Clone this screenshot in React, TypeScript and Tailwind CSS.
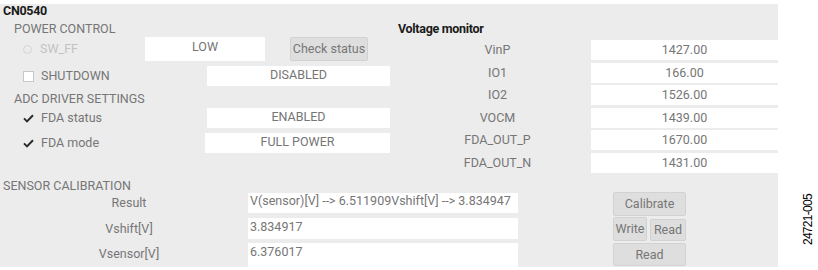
const txt = "text-[12.5px] leading-[14px] text-[#767676]";
const box = "bg-white text-[12.5px] leading-[14px] text-[#767676]";
const btn =
  "bg-[#dedede] border border-[#d2d2d2] rounded-[2px] text-[12.5px] leading-[14px] text-[#767676] flex items-center justify-center";

const Check = () => (
  <svg width="11" height="9" viewBox="0 0 11 9" className="shrink-0">
    <path d="M1 4.4 L4 7.4 L10 1.2" fill="none" stroke="#2a2a2a" strokeWidth="2" />
  </svg>
);

const monitor = [
  { name: "VinP", value: "1427.00" },
  { name: "IO1", value: "166.00" },
  { name: "IO2", value: "1526.00" },
  { name: "VOCM", value: "1439.00" },
  { name: "FDA_OUT_P", value: "1670.00" },
  { name: "FDA_OUT_N", value: "1431.00" },
];

const App = () => {
  return (
    <div className="flex w-[818px] h-[270px] bg-white font-['Roboto',sans-serif]">
      <div className="mt-[4px] w-[778px] h-[263px] bg-[#ececec] flex flex-col">
        {/* top */}
        <div className="flex h-[174px]">
          <div className="w-[390px] flex flex-col">
            <div className="h-[18px] pl-[3px] font-bold text-[12.5px] leading-[14px] text-[#1a1a1a] tracking-[-0.3px]">
              CN0540
            </div>
            <div className={`h-[14px] pl-[14px] ${txt}`}>POWER CONTROL</div>
            <div className="mt-[1px] h-[24px] flex">
              <div className="w-[145px] flex items-center pl-[23px] gap-[8px]">
                <div className="w-[9px] h-[9px] rounded-full border border-[#d4d4d4]"></div>
                <span className="text-[12.5px] leading-[14px] text-[#c2c2c2]">SW_FF</span>
              </div>
              <div className={`w-[120px] h-full text-center pt-[3px] ${box}`}>LOW</div>
              <div className={`ml-[25px] w-[78px] h-full ${btn}`}>Check status</div>
            </div>
            <div className="mt-[5px] h-[20px] flex">
              <div className="w-[207px] flex items-center pl-[23px] gap-[7px]">
                <div className="w-[11px] h-[11px] bg-white border border-[#c8c8c8]"></div>
                <span className={txt}>SHUTDOWN</span>
              </div>
              <div className={`w-[183px] h-full text-center pt-[2px] ${box}`}>DISABLED</div>
            </div>
            <div className={`mt-[6px] h-[14px] pl-[14px] ${txt}`}>ADC DRIVER SETTINGS</div>
            <div className="mt-[2px] h-[20px] flex">
              <div className="w-[207px] flex items-center pl-[23px] gap-[7px]">
                <Check />
                <span className={txt}>FDA status</span>
              </div>
              <div className={`w-[183px] h-full text-center pt-[2px] ${box}`}>ENABLED</div>
            </div>
            <div className="mt-[5px] h-[20px] flex">
              <div className="w-[205px] flex items-center pl-[23px] gap-[7px]">
                <Check />
                <span className={txt}>FDA mode</span>
              </div>
              <div className={`w-[185px] h-full text-center pt-[2px] ${box}`}>FULL POWER</div>
            </div>
          </div>

          <div className="w-[388px] flex flex-col">
            <div className="mt-[18px] h-[14px] pl-[8px] font-bold text-[12.5px] leading-[14px] text-[#1a1a1a] tracking-[-0.3px]">
              Voltage monitor
            </div>
            <div className="mt-[4px] flex flex-col gap-[2.6px]">
              {monitor.map((m) => (
                <div className="flex h-[20px]" key={m.name}>
                  <div className={`ml-[14px] w-[187px] flex items-center justify-center ${txt}`}>
                    {m.name}
                  </div>
                  <div className={`w-[187px] flex items-center justify-center ${box}`}>{m.value}</div>
                </div>
              ))}
            </div>
          </div>
        </div>

        {/* bottom */}
        <div className={`mt-[4px] h-[14px] pl-[3px] ${txt}`}>SENSOR CALIBRATION</div>
        <div className="flex">
          <div className="flex flex-col">
            <div className="h-[20px] flex">
              <div className={`ml-[10px] w-[238px] flex items-center justify-center ${txt}`}>Result</div>
              <div className={`w-[270px] pl-[2px] pt-[1px] whitespace-nowrap overflow-hidden ${box}`}>
                V(sensor)[V] --&gt; 6.511909Vshift[V] --&gt; 3.834947
              </div>
            </div>
            <div className="mt-[5px] h-[21px] flex">
              <div className={`ml-[10px] w-[238px] flex items-center justify-center ${txt}`}>Vshift[V]</div>
              <div className={`w-[270px] pl-[2px] pt-[2px] ${box}`}>3.834917</div>
            </div>
            <div className="mt-[4px] h-[24px] flex">
              <div className={`ml-[10px] w-[238px] flex items-center justify-center pb-[3px] ${txt}`}>
                Vsensor[V]
              </div>
              <div className={`w-[270px] pl-[2px] pt-[2px] ${box}`}>6.376017</div>
            </div>
          </div>
          <div className="ml-[95px] -mt-[1px] w-[73px] flex flex-col">
            <div className={`h-[24px] ${btn}`}>Calibrate</div>
            <div className="mt-[1px] h-[24px] flex gap-[3px]">
              <div className={`w-[34px] h-full ${btn}`}>Write</div>
              <div className={`w-[36px] mt-[2px] h-[22px] ${btn} border-[#a8a8a8]`}>Read</div>
            </div>
            <div className={`mt-[2px] h-[23px] ${btn}`}>Read</div>
          </div>
        </div>
      </div>

      <div className="flex-1 flex flex-col justify-end pb-[25px] pl-[23px]">
        <div className="[writing-mode:vertical-rl] rotate-180 font-['Liberation_Sans',Arial,sans-serif] text-[12px] leading-[14px] tracking-[-0.7px] text-black">
          24721-005
        </div>
      </div>
    </div>
  );
};

export default App;
